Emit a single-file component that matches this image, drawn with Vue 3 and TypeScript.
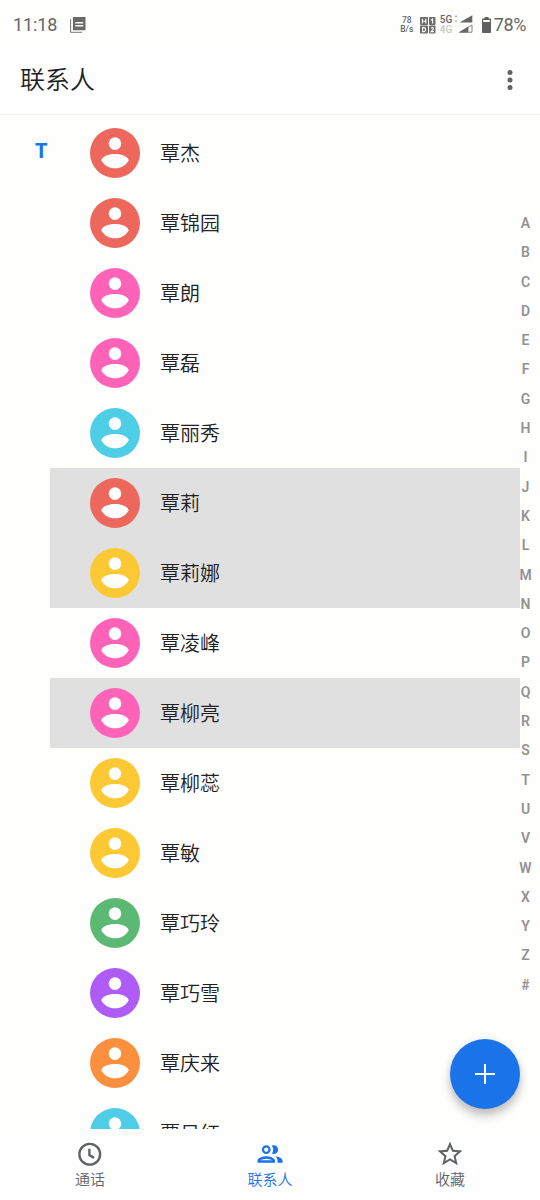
<script setup lang="ts">
interface Contact {
  name: string
  tone: 'red' | 'pink' | 'cyan' | 'yellow' | 'green' | 'purple' | 'orange'
  selected?: boolean
}

const contacts: Contact[] = [
  { name: '覃杰', tone: 'red' },
  { name: '覃锦园', tone: 'red' },
  { name: '覃朗', tone: 'pink' },
  { name: '覃磊', tone: 'pink' },
  { name: '覃丽秀', tone: 'cyan' },
  { name: '覃莉', tone: 'red', selected: true },
  { name: '覃莉娜', tone: 'yellow', selected: true },
  { name: '覃凌峰', tone: 'pink' },
  { name: '覃柳亮', tone: 'pink', selected: true },
  { name: '覃柳蕊', tone: 'yellow' },
  { name: '覃敏', tone: 'yellow' },
  { name: '覃巧玲', tone: 'green' },
  { name: '覃巧雪', tone: 'purple' },
  { name: '覃庆来', tone: 'orange' },
  { name: '覃日红', tone: 'cyan' },
]

const letters: string[] = [...'ABCDEFGHIJKLMNOPQRSTUVWXYZ#']
</script>

<template>
  <div class="phone">
    <div class="status">
      <span class="time">11:18</span>
      <svg class="msg" width="16" height="16" viewBox="0 0 16 16">
        <path d="M3 0H15.5V13.2H3zM5.2 5v1.4h8V5zM5.2 8v1.4h8V8z" fill="#6a6a6a" fill-rule="evenodd" />
        <path d="M0.6 2V15.3H12.3" fill="none" stroke="#777" stroke-width="1" />
      </svg>
      <span class="spacer"></span>
      <div class="rate"><span>78</span><span>B/s</span></div>
      <svg class="hd" width="16" height="17" viewBox="0 0 16 17">
        <g fill="#6c6c6c">
          <rect x="0" y="0" width="8" height="8" rx="1" /><rect x="9" y="0" width="6.5" height="8" rx="1" />
          <rect x="0" y="8.6" width="8" height="8" rx="1" /><rect x="9" y="8.6" width="6.5" height="8" rx="1" />
        </g>
        <g fill="none" stroke="#fff" stroke-width="1.1">
          <path d="M2.4 1.8V6.5M5.8 1.8V6.5M2.4 4.2H5.8M2.6 10.6H4.2Q5.6 10.8 5.6 12.6T4.2 14.6H2.6z" />
          <path d="M11 3.2L12.6 2V6.6M11 11.2Q13.6 9.8 13.4 12L11 14.6H14" />
        </g>
      </svg>
      <div class="net"><span>5G</span><span class="dim">4G</span></div>
      <svg class="signal" width="19" height="18" viewBox="0 0 19 18">
        <path d="M2 0L3.4 2H.6zM2 7.5L.6 5.5H3.4z" fill="#aaa" />
        <path d="M18.3 .3V7.6H5.5z" fill="#666" />
        <path d="M18 10V17.2H5.5z" fill="none" stroke="#777" stroke-width=".9" />
        <path d="M14.4 11.6V17.6H5z" fill="#666" />
      </svg>
      <svg class="battery" width="9" height="16" viewBox="0 0 9 16">
        <path d="M2.5 0H6.5V1.4H8.2Q9 1.4 9 2.2V15.2Q9 16 8.2 16H.8Q0 16 0 15.2V2.2Q0 1.4.8 1.4H2.5zM1.2 3V5H7.8V3z" fill="#606060" fill-rule="evenodd" />
      </svg>
      <span class="percent">78%</span>
    </div>

    <header class="header">
      <h1>联系人</h1>
      <svg width="6" height="20" viewBox="0 0 6 20" fill="#5f6368">
        <circle cx="3" cy="2.5" r="2.5" /><circle cx="3" cy="10" r="2.5" /><circle cx="3" cy="17.5" r="2.5" />
      </svg>
    </header>

    <main class="content">
      <div class="section">T</div>
      <ul class="contacts">
        <li v-for="c in contacts" :key="c.name" :class="{ selected: c.selected }">
          <svg class="avatar" :class="c.tone" width="50" height="50" viewBox="0 0 50 50">
            <circle cx="25" cy="25" r="25" fill="currentColor" />
            <circle cx="25" cy="15.6" r="6.3" fill="#fff" />
            <path d="M11.300 32.400C12 28.600 18 26 25 26S38 28.600 38.700 32.400C35.800 37.400 30.800 40.200 25 40.200S14.200 37.400 11.300 32.400z" fill="#fff" />
          </svg>
          <span>{{ c.name }}</span>
        </li>
      </ul>
      <div class="index">
        <span v-for="l in letters" :key="l">{{ l }}</span>
      </div>
      <button class="fab" aria-label="+">
        <svg width="20" height="20" viewBox="0 0 20 20"><path d="M10 0V20M0 10H20" stroke="#fff" stroke-width="2" /></svg>
      </button>
    </main>

    <nav class="tabs">
      <div class="tab">
        <svg width="30" height="30" viewBox="0 0 24 24" fill="none" stroke="currentColor" stroke-width="1.9">
          <circle cx="11.800" cy="12.200" r="8.300" /><path d="M11.500 7.800V12.900L15.200 15.100" />
        </svg>
        <span>通话</span>
      </div>
      <div class="tab active">
        <svg width="30" height="30" viewBox="0 0 24 24" fill="currentColor">
          <path d="M9 12c1.93 0 3.5-1.57 3.5-3.5S10.930 5 9 5 5.500 6.570 5.500 8.500 7.070 12 9 12zm0-5.200c.94 0 1.700.76 1.700 1.700S9.940 10.200 9 10.200 7.300 9.440 7.300 8.500 8.060 6.800 9 6.800zM9 13.750c-2.340 0-7 1.170-7 3.500V19h14v-1.750c0-2.330-4.660-3.500-7-3.500zM4.340 17c.84-.58 2.870-1.250 4.660-1.250s3.820.67 4.660 1.250zM16.040 13.810c1.160.84 1.960 1.960 1.960 3.440V19h4v-1.750c0-2.020-3.500-3.170-5.960-3.440zM15 12c1.930 0 3.500-1.570 3.500-3.500S16.930 5 15 5c-.54 0-1.040.13-1.500.35.63.89 1 1.980 1 3.150s-.37 2.260-1 3.150c.46.22.96.35 1.500.35z" />
        </svg>
        <span>联系人</span>
      </div>
      <div class="tab">
        <svg width="30" height="30" viewBox="0 0 24 24" fill="currentColor">
          <path d="M22 9.240l-7.190-.62L12 2 9.190 8.630 2 9.240l5.460 4.730L5.820 21 12 17.270 18.180 21l-1.630-7.030L22 9.240zM12 15.400l-3.760 2.270 1-4.280-3.320-2.880 4.380-.38L12 6.100l1.710 4.040 4.380.38-3.320 2.880 1 4.280L12 15.400z" />
        </svg>
        <span>收藏</span>
      </div>
    </nav>
  </div>
</template>

<style>
body {
  background: #fefefc;
}
</style>

<style scoped>
.phone {
  display: flex;
  flex-direction: column;
  width: 540px;
  height: 1200px;
  overflow: hidden;
  background: #fefefc;
  font-family: Roboto, "Noto Sans CJK SC", sans-serif;
  color: #202124;
}
.status {
  display: flex;
  align-items: center;
  height: 50px;
  box-sizing: border-box;
  padding: 0 14px 0 13px;
  color: #666;
}
.time {
  width: 57px;
  margin-top: -1px;
  font-size: 18px;
  letter-spacing: -0.1px;
}
.spacer {
  flex: 1;
}
.rate {
  display: flex;
  flex-direction: column;
  align-items: center;
  width: 12px;
  margin-right: 7px;
  font-size: 8.500px;
  font-weight: 500;
  line-height: 9px;
}
.net {
  display: flex;
  flex-direction: column;
  width: 13px;
  margin-left: 4px;
  margin-top: -1px;
  font-size: 10px;
  font-weight: 500;
  line-height: 10px;
}
.dim {
  color: #c8c8c8;
}
.signal {
  margin: -2px 0 0 1px;
}
.battery {
  margin: -1px 3px 0 9px;
}
.percent {
  margin-top: -1px;
  font-size: 18px;
  letter-spacing: -0.4px;
}
.header {
  display: flex;
  align-items: center;
  justify-content: space-between;
  height: 65px;
  box-sizing: border-box;
  padding: 0 27px 5px 20px;
  border-bottom: 1px solid #f3f3f3;
  background: #fefefe;
}
h1 {
  margin: 2px 0 0;
  font-size: 25px;
  font-weight: 350;
  line-height: 36px;
}
.content {
  position: relative;
  display: flex;
  height: 1014px;
  overflow: hidden;
}
.section {
  width: 50px;
  box-sizing: border-box;
  padding: 24px 0 0 35px;
  color: #1a73e8;
  font-size: 20px;
  font-weight: 800;
  line-height: 24px;
}
.contacts {
  width: 470px;
  margin: 3px 0 0;
  padding: 0;
  list-style: none;
}
li {
  display: flex;
  align-items: center;
  gap: 20px;
  height: 70px;
  padding-left: 40px;
  font-size: 20px;
  font-weight: 350;
  line-height: 30px;
}
li span {
  margin-top: 2px;
}
li.selected {
  background: #e0e0e0;
}
.red { color: #ee675c; }
.pink { color: #ff63b8; }
.cyan { color: #4ecde6; }
.yellow { color: #fcc934; }
.green { color: #5bb974; }
.purple { color: #af5cf7; }
.orange { color: #fa903e; }
.index {
  display: flex;
  flex-direction: column;
  width: 20px;
  margin-top: 94px;
  margin-left: -4.500px;
  align-items: center;
  color: #929292;
  font-size: 14px;
  font-weight: 600;
}
.index span {
  height: 29.300px;
  line-height: 29.300px;
  flex: none;
}
.fab {
  position: absolute;
  right: 20px;
  bottom: 20px;
  display: flex;
  align-items: center;
  justify-content: center;
  width: 70px;
  height: 70px;
  padding: 0;
  border: 0;
  border-radius: 50%;
  background: #1a73e8;
  box-shadow: 0 7px 10px rgba(0, 0, 0, 0.22), 0 1px 8px rgba(0, 0, 0, 0.08);
}
.tabs {
  display: flex;
  height: 71px;
  background: #fefefe;
}
.tab {
  display: flex;
  flex-direction: column;
  align-items: center;
  width: 180px;
  padding-top: 10px;
  color: #5f6368;
  font-size: 15px;
  font-weight: 350;
  line-height: 23px;
}
.tab svg {
  flex: none;
}
.tab.active {
  color: #1a73e8;
}
</style>
